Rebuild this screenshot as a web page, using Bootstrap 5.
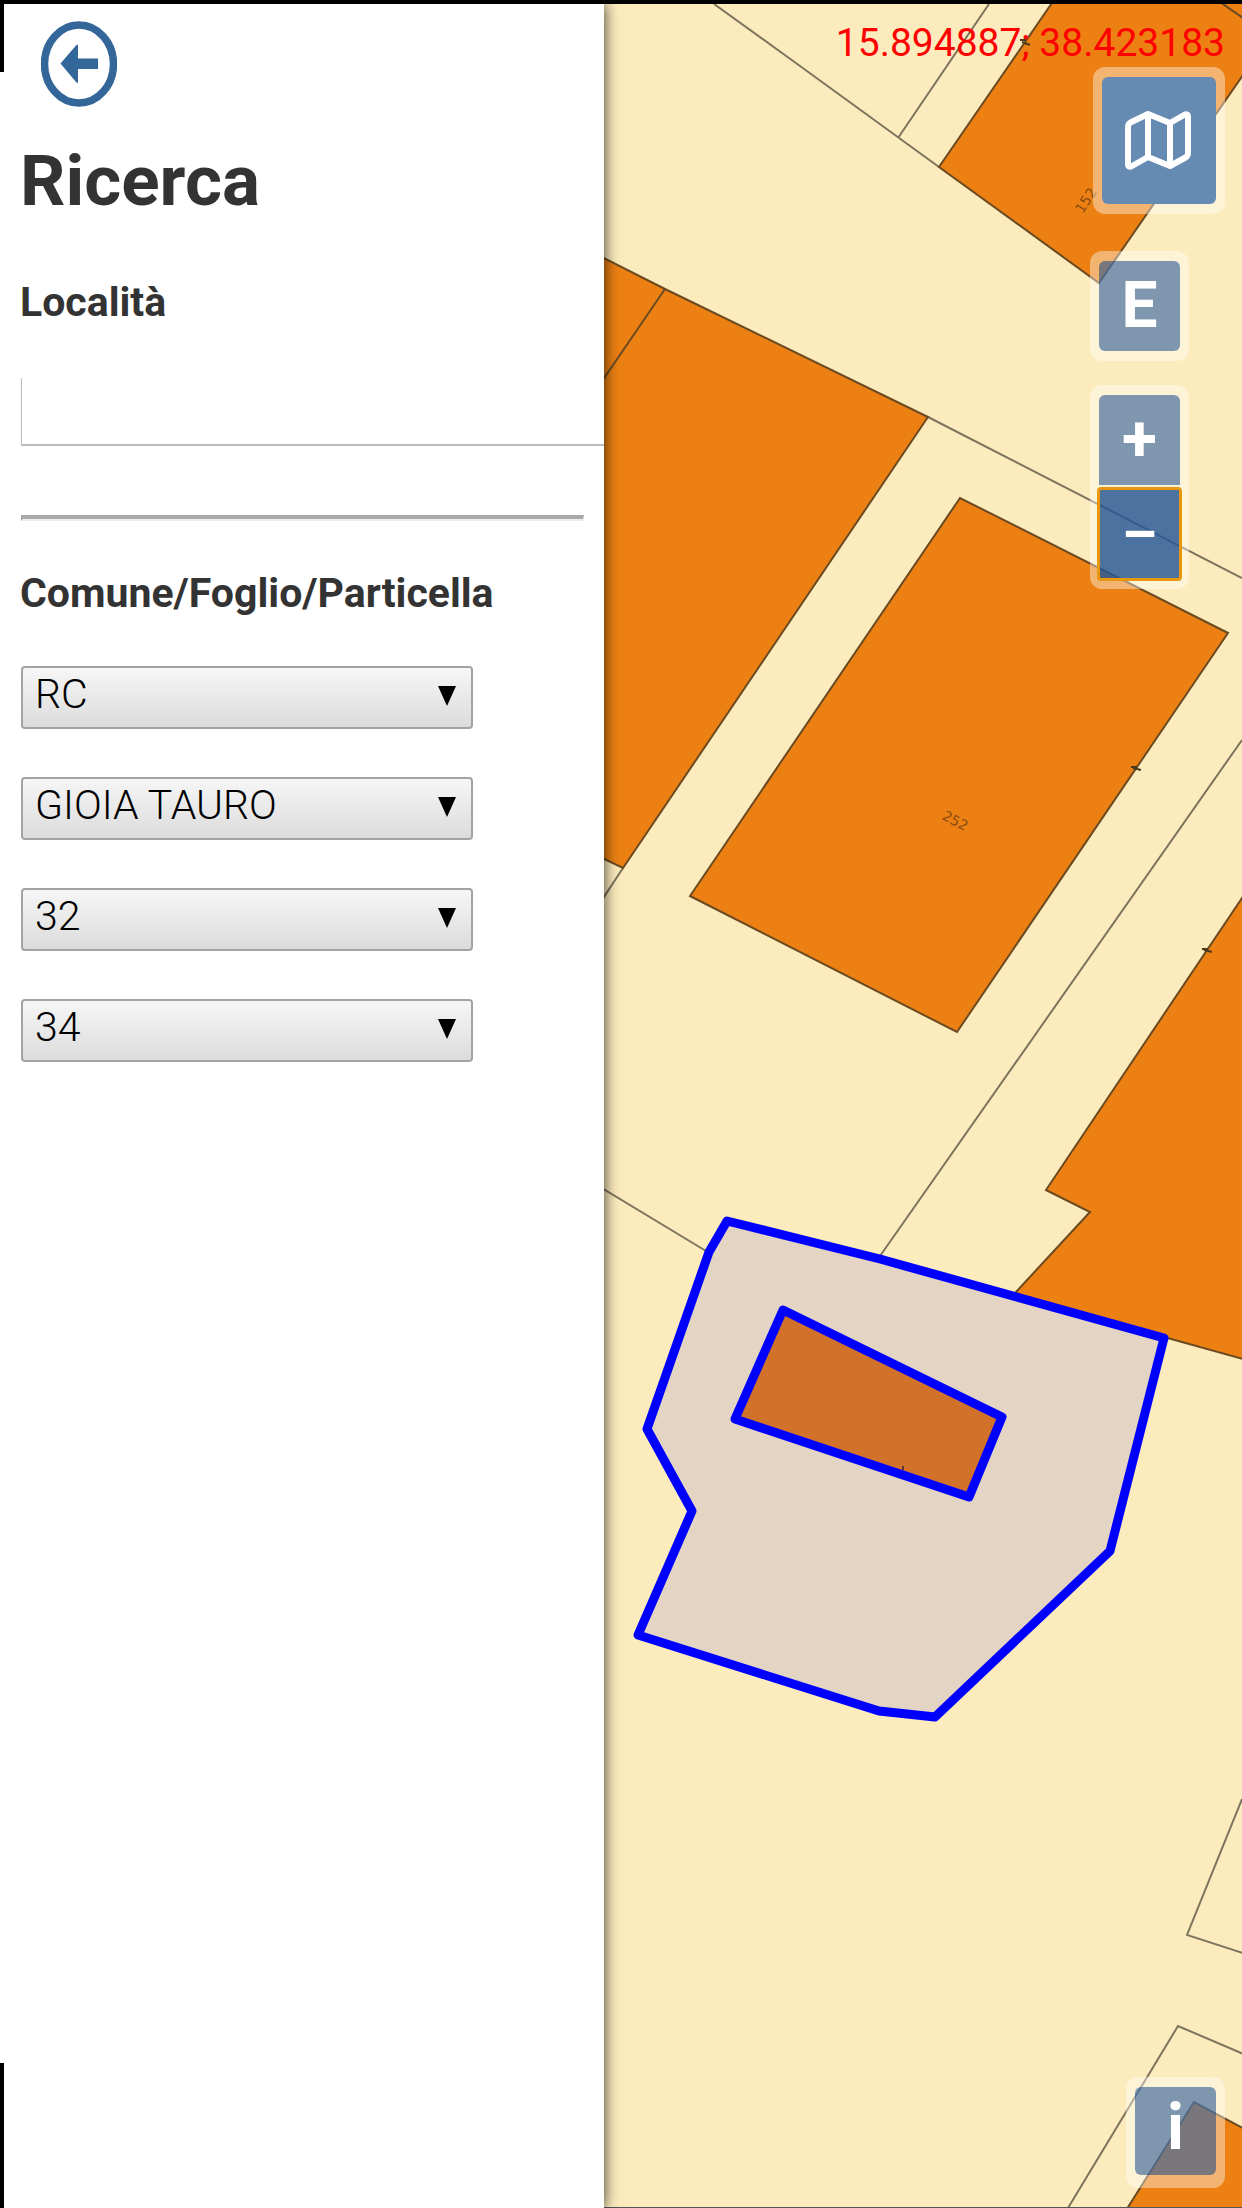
<!DOCTYPE html>
<html lang="it">
<head>
<meta charset="utf-8">
<meta name="viewport" content="width=device-width, initial-scale=1">
<title>Ricerca</title>
<link href="https://cdn.jsdelivr.net/npm/bootstrap@5.3.0/dist/css/bootstrap.min.css" rel="stylesheet">
<style>
  body { font-family: Roboto, "Liberation Sans", sans-serif; background: #000; color: #333; padding-top: 4px; }
  .app-shell { min-height: calc(100vh - 4px); }
  .search-panel { flex: 0 0 calc(50vw - 17px); background: #fff; padding: 17px 20px 0 21px; z-index: 2; box-shadow: 0 0 14px rgba(0,0,0,.8); }
  .search-panel::before, .search-panel::after { content: ""; position: absolute; left: 0; width: 4px; background: #000; }
  .search-panel::before { top: 0; height: 68px; }
  .search-panel::after { bottom: 0; height: 145px; }
  .back-btn { margin-left: 20px; border: 0; background: none; }
  .panel-title { font-size: 71px; line-height: 80px; margin: 34px 0 0 -1px; }
  .panel-label { font-size: 41px; line-height: 48px; margin-left: -1px; }
  .label-place { margin-top: 57px; margin-bottom: 52px; }
  .label-parcel { margin-top: 48px; margin-bottom: 49px; }
  .place-box { height: 68px; margin-right: -20px; }
  .place-input { height: 68px; border: solid #bbb; border-width: 0 0 2px 1px; font-size: 41px; font-weight: 300; }
  .panel-rule { margin: 69px 0 0; border: solid; border-width: 4px 1px 2px 2px; border-color: #a9a9a9 #eee #eee #a9a9a9; opacity: 1; }
  .parcel-list { gap: 48px; }
  .parcel-select { width: 452px; height: 63px; padding: 0 40px 7px 12px; border: 2px solid #a3a3a3; border-radius: 4px; font-size: 41px; font-weight: 300; line-height: 48px; color: #000; appearance: none;
    background: url("data:image/svg+xml,%3Csvg xmlns='http://www.w3.org/2000/svg' width='18' height='20'%3E%3Cpath d='M0 0h18l-9 20z'/%3E%3C/svg%3E") right 15px top 18px no-repeat, linear-gradient(#f6f6f6, #dcdcdc); }
  .map-area { background: #fcebbd; border-bottom: 1px solid #555; min-width: 0; }
  .map-overlay { padding: 0 17px 19px 0; pointer-events: none; }
  .map-overlay > * { pointer-events: auto; }
  .coords { font-size: 39px; line-height: 48px; color: #f00; margin-top: 15px; }
  .ctl { padding: 10px 9px; border-radius: 12px; background: rgba(255,255,255,.4); }
  .ctl-side { margin-right: 36px; }
  .ctl-edit { margin-top: 37px; }
  .ctl-zoom { margin-top: 24px; gap: 4px; }
  .ctl-info { padding-bottom: 13px; }
  .map-btn { width: 81px; height: 90px; border: 0; border-radius: 6px; background: rgba(0,60,136,.5); color: #fff; font-size: 64px; font-weight: 700; line-height: 84px; padding: 0; text-align: center; }
  .map-btn-lg { width: 114px; height: 127px; background: #668bb3; }
  .map-btn-info { height: 88px; line-height: 80px; padding-bottom: 6px; }
  .zoom-in { border-radius: 6px 6px 0 0; }
  .zoom-out { border-radius: 2px; background: rgba(0,60,136,.7); outline: 3px solid #e8970f; outline-offset: -1px; font-size: 56px; }
</style>
</head>
<body>
<div class="app-shell d-flex">
  <aside class="search-panel position-relative">
    <button type="button" class="back-btn d-block p-0" aria-label="Indietro">
      <svg class="d-block" width="76" height="86" viewBox="0 0 76 86">
        <ellipse cx="38" cy="43" rx="34.500" ry="39" fill="none" stroke="#336699" stroke-width="7.500"/>
        <path d="M19.500 42.500 35 24.500q2-2 2 .5v12.500h20v10.500H37v12.500q0 2.500-2 .5z" fill="#336699"/>
      </svg>
    </button>
    <h1 class="panel-title fw-bold">Ricerca</h1>
    <form>
      <label class="panel-label label-place fw-bold d-block" for="place">Località</label>
      <div class="place-box"><input class="place-input form-control rounded-0 shadow-none" id="place" type="text"></div>
      <hr class="panel-rule">
      <h2 class="panel-label label-parcel fw-bold">Comune/Foglio/Particella</h2>
      <div class="parcel-list d-flex flex-column align-items-start">
        <select class="parcel-select" aria-label="Provincia"><option>RC</option></select>
        <select class="parcel-select" aria-label="Comune"><option>GIOIA TAURO</option></select>
        <select class="parcel-select" aria-label="Foglio"><option>32</option></select>
        <select class="parcel-select" aria-label="Particella"><option>34</option></select>
      </div>
    </form>
  </aside>
  <main class="map-area flex-fill position-relative overflow-hidden">
    <svg class="position-absolute top-0 start-0 w-100 h-100" viewBox="604 4 638 2203" preserveAspectRatio="xMinYMin slice">
      <!-- parcel boundaries -->
      <g fill="none" stroke="#7c745d" stroke-width="2">
        <path d="M714 4 800 66 939 167M989 4 898 138M928 417 1242 578M623 868 600 903M1242 740 880 1256M600 1187 706 1251"/>
        <path d="M1242 1799 1187 1935 1246 1954M1246 2055 1178 2026 1068 2208"/>
      </g>
      <!-- buildings -->
      <g fill="#ec8013" stroke="#6b4a22" stroke-width="2">
        <path d="M1054 0 939 167 1099 283 1250 65V0z"/>
        <path d="M1217 0 1246 20" fill="none"/>
        <path d="M600 256 665 289 928 417 623 868 600 857z"/>
        <path d="M665 289 600 384" fill="none"/>
        <path d="M960 498 690 896 957 1032 1228 633z"/>
        <path d="M1250 886 1046 1190 1090 1212 1015 1293 1164 1337 1250 1361z"/>
        <path d="M1194 2102 1125 2212H1250V2132z"/>
      </g>
      <g stroke="#4d3a1e" stroke-width="2" fill="none">
        <path d="M1020 40h6M1022 42l8 3M1131 767h6M1133 768l8 2M1202 949h6M1204 950l8 2"/>
      </g>
      <g font-family="DejaVu Sans, sans-serif" font-size="14" fill="#8a4c10" text-anchor="middle">
        <text transform="translate(1090 203) rotate(-57)">152</text>
        <text transform="translate(953 825) rotate(28)">252</text>
      </g>
      <!-- selected parcel -->
      <g stroke="#00f" stroke-width="9" stroke-linejoin="round">
        <path fill="#e4d4c3" d="M727 1221 880 1259 1164 1338 1110 1551 935 1717 879 1711 638 1635 692 1511 647 1429 709 1252z"/>
        <path fill="#d2722a" d="M783 1310 1002 1417 969 1497 735 1419z"/>
      </g>
      <path d="M903 1466v4" stroke="#5a3a3a" stroke-width="2"/>
    </svg>
    <div class="map-overlay position-absolute top-0 start-0 w-100 h-100 d-flex flex-column align-items-end">
      <div class="coords">15.894887; 38.423183</div>
      <div class="ctl">
        <button type="button" class="map-btn map-btn-lg d-flex align-items-center justify-content-center" aria-label="Mappe">
          <svg width="70" height="62" viewBox="0 0 70 62" fill="none" stroke="#fff" stroke-width="6" stroke-linejoin="round" stroke-linecap="round">
            <path d="M4 17q0-3 2.500-4.500L24 4 46 13 60 5q4-2 4 2V43q0 3-2.500 4.500L46 56 24 47 8 56q-4 2-4-2zM24 4v43M46 13v43"/>
          </svg>
        </button>
      </div>
      <div class="ctl ctl-side ctl-edit"><button type="button" class="map-btn d-block">E</button></div>
      <div class="ctl ctl-side ctl-zoom d-flex flex-column">
        <button type="button" class="map-btn zoom-in" aria-label="Ingrandisci">+</button>
        <button type="button" class="map-btn zoom-out" aria-label="Riduci">–</button>
      </div>
      <div class="ctl ctl-info mt-auto"><button type="button" class="map-btn map-btn-info d-block">i</button></div>
    </div>
  </main>
</div>
<script src="https://cdn.jsdelivr.net/npm/bootstrap@5.3.0/dist/js/bootstrap.bundle.min.js"></script>
</body>
</html>
